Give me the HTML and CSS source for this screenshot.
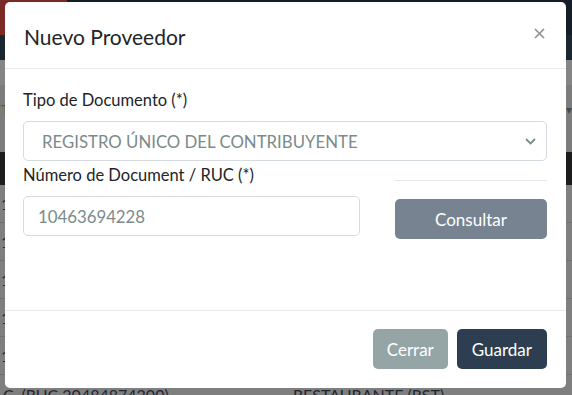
FILE: index.html
```html
<!doctype html>
<html lang="es">
    <head>
        <meta charset="UTF-8">
        <meta name="viewport" content="width=device-width, initial-scale=1.0">
        <title>Nuevo Proveedor</title>
        <link rel="stylesheet" href="styles.css">
    </head>
    <body>
        <div class="page">
            <header class="topbar">
                <div class="brand"></div>
            </header>
            <div class="subbar"></div>
            <div class="strip"></div>
            <div class="toolbar"><span class="tool">T</span><span class="caret">&#9662;</span></div>
            <div class="strip short"></div>
            <div class="thead"></div>
            <div class="row">1.0</div>
            <div class="row">1.0</div>
            <div class="row">1.0</div>
            <div class="row">1.0</div>
            <div class="row">1.0</div>
            <div class="row last"><span class="c1">C. (RUC 20484874200)</span><span class="c2">RESTAURANTE (RST)</span></div>
        </div>

        <div class="modal">
            <div class="modal-header">
                <h5 class="modal-title">Nuevo Proveedor</h5>
                <button class="close" type="button" aria-label="Cerrar">
                    <svg width="11" height="11" viewBox="0 0 11 11"><path d="M1 1L10 10M10 1L1 10" stroke="#8d8f92" stroke-width="1.6" fill="none"/></svg>
                </button>
            </div>
            <div class="modal-body">
                <label class="lbl">Tipo de Documento (*)</label>
                <div class="select">
                    <span>REGISTRO ÚNICO DEL CONTRIBUYENTE</span>
                    <svg width="11" height="7" viewBox="0 0 11 7"><path d="M1 1L5.5 5.5L10 1" stroke="#7b8a8b" stroke-width="1.8" fill="none"/></svg>
                </div>
                <div class="grid">
                    <div>
                        <label class="lbl">Número de Document / RUC (*)</label>
                        <div class="input">10463694228</div>
                    </div>
                    <div>
                        <hr class="sep">
                        <button class="btn btn-gray btn-block" type="button">Consultar</button>
                    </div>
                </div>
            </div>
            <div class="modal-footer">
                <button class="btn btn-secondary" type="button">Cerrar</button>
                <button class="btn btn-primary" type="button">Guardar</button>
            </div>
        </div>
    </body>
</html>
```

FILE: styles.css
```css
body {
    margin: 0;
    font-family: Lato, "Open Sans", sans-serif;
    background: #7f7f7f;
    overflow: hidden;
}
.page {
    width: 572px;
    height: 395px;
}
.topbar {
    height: 35px;
    background: #151d27;
}
.brand {
    width: 67px;
    height: 35px;
    background: #7a2b23;
}
.subbar {
    height: 25px;
    background: #1b2631;
}
.strip {
    height: 25px;
    background: #858585;
}
.strip.short {
    height: 19px;
    background: #7c7c7c;
}
.toolbar {
    height: 48px;
    background: #7c7c7c;
    display: flex;
    justify-content: space-between;
    align-items: center;
    font-size: 16px;
    color: #6d5a18;
    padding-left: 1px;
}
.caret {
    color: #4a4a4a;
    font-size: 12px;
}
.thead {
    height: 33px;
    background: #1c1c1c;
}
.row {
    height: 37px;
    border-bottom: 1px solid #707070;
    font-size: 16px;
    line-height: 37px;
    color: #1f2630;
    padding-left: 1px;
}
.row.last {
    display: flex;
    height: 20px;
    line-height: 16px;
    padding-top: 12px;
    border-bottom: 0;
}
.c1 {
    width: 290px;
    padding-left: 2px;
}

.modal {
    position: absolute;
    left: 5px;
    top: 2px;
    width: 561px;
    height: 386px;
    background: #fff;
    border-radius: 5px;
    display: flex;
    flex-direction: column;
    color: #212529;
}
.modal-header {
    height: 67px;
    box-sizing: border-box;
    border-bottom: 1px solid #e9ecef;
    display: flex;
    align-items: center;
    justify-content: space-between;
    padding: 3px 21px 0 19px;
}
.modal-title {
    margin: 0;
    font-size: 21px;
    font-weight: 400;
    line-height: 24px;
}
.close {
    border: 0;
    background: none;
    padding: 0;
    margin-top: -6px;
    display: flex;
}
.modal-body {
    flex: 1;
    padding: 19px 19px 0 18px;
}
.lbl {
    display: block;
    font-size: 16.5px;
    line-height: 24px;
    margin-bottom: 9px;
}
.select, .input {
    height: 40px;
    box-sizing: border-box;
    border: 1px solid #d5dbe0;
    border-radius: 5px;
    display: flex;
    align-items: center;
    font-size: 16.8px;
    color: #7b8a8b;
}
.select {
    justify-content: space-between;
    padding: 0 10px 0 18px;
    margin-bottom: 2px;
}
.input {
    padding: 0 14px;
}
.grid {
    display: grid;
    grid-template-columns: 337px 152px;
    column-gap: 35px;
}
.sep {
    margin: 17px 0 18px;
    border: 0;
    border-top: 1px solid #e3e6ea;
}
.btn {
    height: 40px;
    border: 0;
    border-radius: 5px;
    font-family: inherit;
    font-size: 17px;
    color: #fff;
    padding: 0 14px;
}
.btn-block {
    display: block;
    width: 100%;
}
.btn-gray {
    background: #778390;
}
.btn-secondary {
    background: #95a5a6;
}
.btn-primary {
    background: #2c3e50;
    padding: 0 15px;
}
.modal-footer {
    border-top: 1px solid #e9ecef;
    padding: 18px 19px 19px;
    display: flex;
    justify-content: flex-end;
    gap: 9px;
}
```
